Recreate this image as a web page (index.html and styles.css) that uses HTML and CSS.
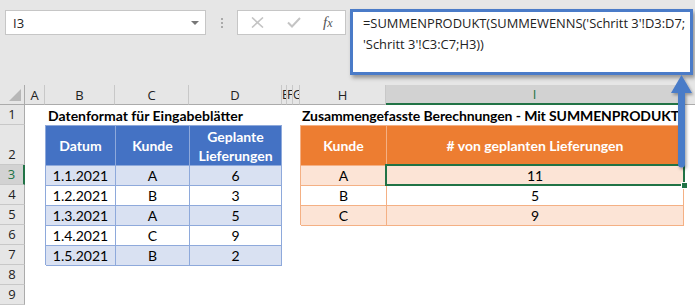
FILE: index.html
```html
<!DOCTYPE html>
<html lang="de">
<head>
    <meta charset="UTF-8">
    <meta name="viewport" content="width=device-width, initial-scale=1.0">
    <title>Mappe1 - Excel</title>
    <link rel="stylesheet" href="styles.css">
</head>
<body>
<div class="window">
    <!-- name box, buttons and the expanded formula bar -->
    <div class="formula-area">
        <div class="namebox">
            <span>I3</span>
            <span class="drop"></span>
        </div>
        <div class="grip"><i></i><i></i><i></i></div>
        <div class="fx-buttons">
            <svg width="13" height="11" viewBox="0 0 13 11"><path d="M1 0.5L12 10.5M12 0.5L1 10.5" stroke="#c4c4c4" stroke-width="1.6" fill="none"/></svg>
            <svg width="14" height="11" viewBox="0 0 14 11"><path d="M1 5.5L5 9.5L13 1" stroke="#c4c4c4" stroke-width="2" fill="none"/></svg>
            <span class="fx">f<span>x</span></span>
        </div>
        <div class="formula">=SUMMENPRODUKT(SUMMEWENNS('Schritt 3'!D3:D7;<br>'Schritt 3'!C3:C7;H3))</div>
    </div>

    <div class="sheet">
        <div class="corner"><span></span></div>
        <div class="colhdr">A</div>
        <div class="colhdr">B</div>
        <div class="colhdr">C</div>
        <div class="colhdr">D</div>
        <div class="colhdr thin">E</div>
        <div class="colhdr thin">F</div>
        <div class="colhdr thin">G</div>
        <div class="colhdr">H</div>
        <div class="colhdr active">I</div>
        <div class="colhdr last"></div>

        <div class="rowhdr r1">1</div>
        <div class="rowhdr r2">2</div>
        <div class="rowhdr r3 active">3</div>
        <div class="rowhdr r4">4</div>
        <div class="rowhdr r5">5</div>
        <div class="rowhdr r6">6</div>
        <div class="rowhdr r7">7</div>
        <div class="rowhdr r8">8</div>
        <div class="rowhdr r9">9</div>

        <div class="title left-title">Datenformat für Eingabeblätter</div>
        <div class="title right-title">Zusammengefasste Berechnungen - Mit SUMMENPRODUKT</div>

        <div class="data blue">
            <div class="th">Datum</div><div class="th">Kunde</div><div class="th">Geplante<br>Lieferungen</div>
            <div class="band">1.1.2021</div><div class="band">A</div><div class="band">6</div>
            <div>1.2.2021</div><div>B</div><div>3</div>
            <div class="band">1.3.2021</div><div class="band">A</div><div class="band">5</div>
            <div>1.4.2021</div><div>C</div><div>9</div>
            <div class="band">1.5.2021</div><div class="band">B</div><div class="band">2</div>
        </div>

        <div class="data orange">
            <div class="th">Kunde</div><div class="th"># von geplanten Lieferungen</div>
            <div class="band">A</div><div class="band">11</div>
            <div>B</div><div>5</div>
            <div class="band">C</div><div class="band">9</div>
        </div>

        <div class="selection"><span class="handle"></span></div>
    </div>

    <!-- arrow from the active cell up to the formula -->
    <svg class="arrow" width="30" height="110" viewBox="0 0 30 110">
        <defs>
            <filter id="sh" x="-50%" y="-20%" width="200%" height="140%">
                <feDropShadow dx="1.5" dy="2" stdDeviation="1.5" flood-color="#000" flood-opacity="0.35"/>
            </filter>
        </defs>
        <g filter="url(#sh)" fill="#4a7bc8">
            <path d="M12 17H19V89A3.5 3.5 0 0 1 12 89Z"/>
            <path d="M15.5 0L26 18H5Z"/>
        </g>
    </svg>
</div>
</body>
</html>
```

FILE: styles.css
```css
*{
    margin: 0;
    padding: 0;
    box-sizing: border-box;
}
body{
    background-color: #fff;
    font-family: "Lato", "Liberation Sans", sans-serif;
}
.window{
    position: relative;
    width: 695px;
    height: 305px;
    overflow: hidden;
}

/* ---- formula bar ---- */
.formula-area{
    height: 85px;
    background-color: #e6e6e6;
    display: flex;
    align-items: flex-start;
    padding: 10px 0 0 5px;
}
.namebox{
    width: 201px;
    height: 25px;
    background: #fff;
    border: 1px solid #c6c6c6;
    display: flex;
    align-items: center;
    justify-content: space-between;
    padding: 0 6px 0 7px;
    font-family: "Open Sans", "Noto Sans", sans-serif;
    font-size: 13px;
    color: #222;
}
.drop{
    width: 0;
    height: 0;
    border-left: 4px solid transparent;
    border-right: 4px solid transparent;
    border-top: 4px solid #777;
}
.grip{
    width: 31px;
    height: 25px;
    display: flex;
    flex-direction: column;
    align-items: center;
    justify-content: center;
    gap: 2px;
}
.grip i{
    width: 2px;
    height: 2px;
    background: #aaa;
}
.fx-buttons{
    width: 109px;
    height: 25px;
    background: #fff;
    border: 1px solid #c6c6c6;
    display: flex;
    align-items: center;
    padding-left: 13px;
    gap: 23px;
}
.fx{
    font-family: "Liberation Serif", serif;
    font-style: italic;
    font-size: 15px;
    color: #555;
    margin-left: -1px;
}
.fx span{
    font-size: 12px;
}
.formula{
    width: 343px;
    height: 66px;
    margin: -1px 0 0 4px;
    background: #fff;
    border: 3px solid #4a7bc8;
    box-shadow: 2px 3px 4px rgba(0, 0, 0, 0.35);
    padding: 1px 0 0 10px;
    font-family: "Open Sans", "Noto Sans", sans-serif;
    font-size: 12.9px;
    line-height: 21px;
    color: #222;
    white-space: nowrap;
    position: relative;
    z-index: 2;
}

/* ---- grid ---- */
.sheet{
    display: grid;
    grid-template-columns: 25px 20px 70px 74px 93px 5px 6px 7px 86px 298px 1fr;
    grid-template-rows: 20px 20px 40px repeat(7, 20px);
    font-size: 14px;
    color: #000;
}
.corner{
    background: #e6e6e6;
    border-right: 1px solid #ababab;
    border-bottom: 1px solid #ababab;
    position: relative;
}
.corner span{
    position: absolute;
    right: 3px;
    bottom: 3px;
    width: 0;
    height: 0;
    border-left: 12px solid transparent;
    border-bottom: 12px solid #b7b7b7;
}
.colhdr{
    background: #e6e6e6;
    border-bottom: 1px solid #ababab;
    border-right: 1px solid #c8c8c8;
    font-family: "Open Sans", "Noto Sans", sans-serif;
    font-size: 13px;
    color: #222;
    display: flex;
    align-items: center;
    justify-content: center;
    overflow: hidden;
}
.colhdr.thin{
    justify-content: flex-start;
    font-size: 12px;
}
.colhdr.active{
    background: #d2d2d2;
    border-bottom: 2px solid #217346;
    color: #217346;
}
.colhdr.last{
    border-right: none;
}
.rowhdr{
    grid-column: 1;
    background: #e6e6e6;
    border-right: 1px solid #ababab;
    border-bottom: 1px solid #c8c8c8;
    font-family: "Open Sans", "Noto Sans", sans-serif;
    font-size: 13px;
    color: #222;
    display: flex;
    align-items: flex-end;
    justify-content: center;
    padding-bottom: 1px;
}
.rowhdr.active{
    background: #d2d2d2;
    border-right: 2px solid #217346;
    color: #217346;
}
.r1{ grid-row: 2; }
.r2{ grid-row: 3; }
.r3{ grid-row: 4; }
.r4{ grid-row: 5; }
.r5{ grid-row: 6; }
.r6{ grid-row: 7; }
.r7{ grid-row: 8; }
.r8{ grid-row: 9; }
.r9{ grid-row: 10; }

.title{
    grid-row: 2;
    font-weight: bold;
    font-size: 14px;
    white-space: nowrap;
    display: flex;
    align-items: center;
    padding-left: 3px;
}
.left-title{
    grid-column: 3 / 6;
}
.right-title{
    grid-column: 9 / 11;
    padding-left: 2px;
    letter-spacing: -0.1px;
}

/* ---- formatted tables ---- */
.data{
    display: grid;
    grid-template-rows: 40px;
    grid-auto-rows: 20px;
    font-size: 14px;
}
.data > div{
    display: flex;
    align-items: center;
    justify-content: center;
    text-align: center;
    line-height: 19px;
}
.data .th{
    color: #fff;
    font-weight: bold;
}
.data.blue{
    grid-column: 3 / 6;
    grid-row: 3 / 9;
    grid-template-columns: 70px 74px 1fr;
    border-left: 1px solid #8ea9db;
    border-top: 1px solid #8ea9db;
}
.blue > div{
    border-right: 1px solid #8ea9db;
    border-bottom: 1px solid #8ea9db;
}
.blue .th{
    background: #4472c4;
}
.blue .band{
    background: #d9e1f2;
}
.data.orange{
    grid-column: 9 / 11;
    grid-row: 3 / 7;
    grid-template-columns: 86px 1fr;
    border-left: 1px solid #f4b084;
    border-top: 1px solid #f4b084;
}
.orange > div{
    border-right: 1px solid #f4b084;
    border-bottom: 1px solid #f4b084;
}
.orange .th{
    background: #ed7d31;
}
.orange .band{
    background: #fce4d6;
}

/* active cell I3 */
.selection{
    grid-column: 10;
    grid-row: 4;
    margin: -1px -1px -1px -1px;
    border: 2px solid #217346;
    position: relative;
    z-index: 1;
}
.handle{
    position: absolute;
    right: -5px;
    bottom: -5px;
    width: 7px;
    height: 7px;
    background: #217346;
    border: 1px solid #fff;
}

.arrow{
    position: absolute;
    left: 666px;
    top: 75px;
    z-index: 3;
}
```
